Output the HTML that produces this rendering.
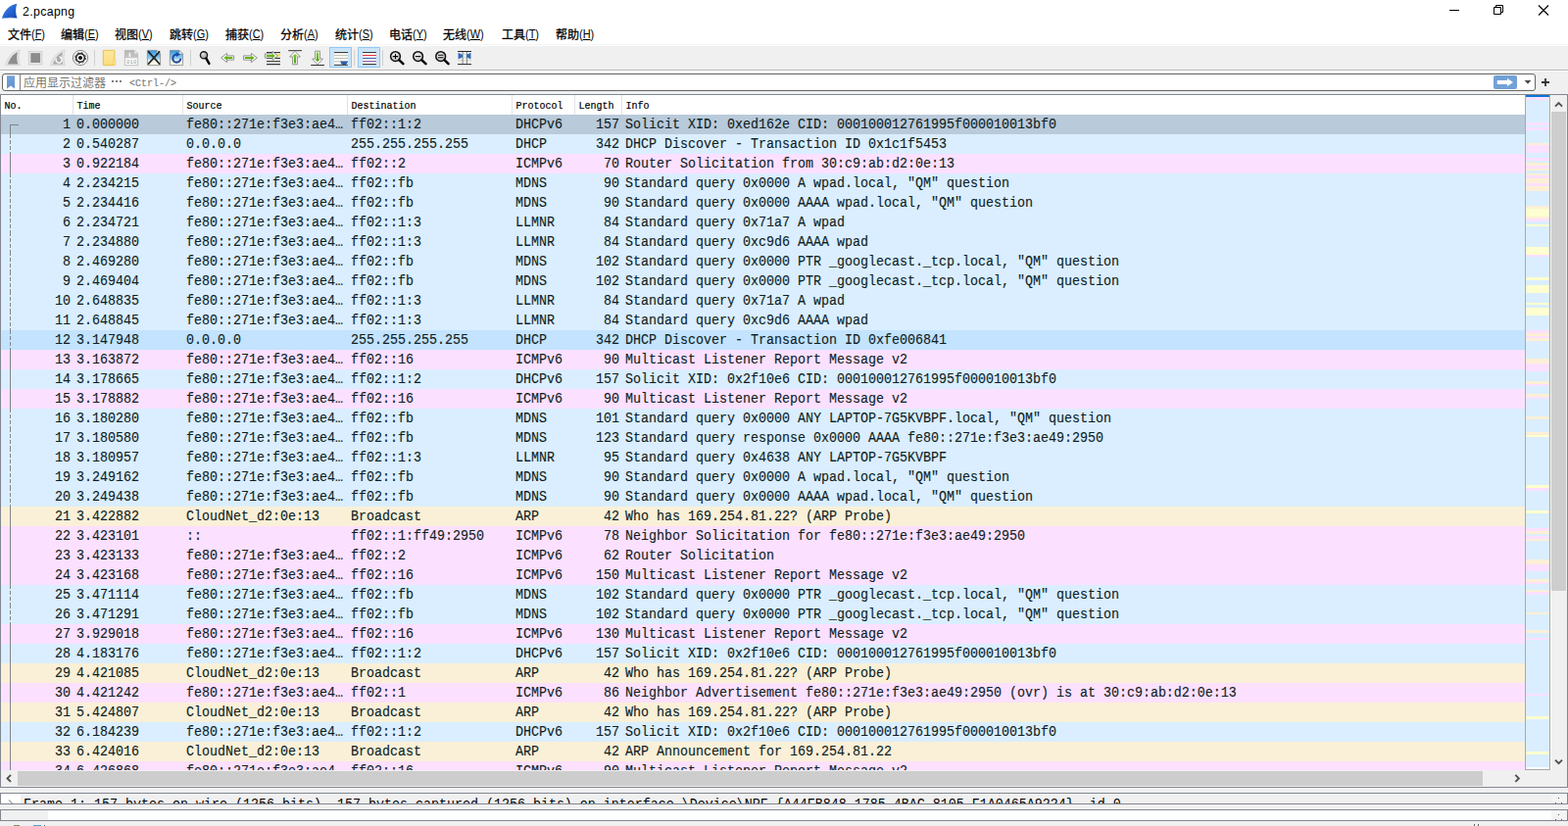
<!DOCTYPE html>
<html><head><meta charset="utf-8"><title>2.pcapng</title>
<style>
*{margin:0;padding:0;box-sizing:border-box}
html,body{width:1600px;height:843px;overflow:hidden;background:#f0f0f0;font-family:"Liberation Sans",sans-serif}
#w{position:relative;width:1600px;height:843px;overflow:hidden;background:#f0f0f0}
.abs{position:absolute}
.cjk{position:absolute;overflow:visible}
.cjk text{font-family:"Liberation Sans","Noto Sans CJK SC",sans-serif;font-size:1000px}
#title{position:absolute;left:0;top:0;width:1600px;height:47px;background:#fff;border-bottom:1px solid #fff}
#title:after{content:"";position:absolute;left:0;top:45px;width:1600px;height:1px;background:#f5f5f5}
#tt{position:absolute;left:23px;top:5.3px;font-size:12.3px;color:#000;line-height:14px;letter-spacing:.36px}
.mk{position:absolute;top:27.6px;font-size:12px;line-height:14px;color:#000;transform:scaleX(.91);transform-origin:0 0;white-space:nowrap}
#tb{position:absolute;left:0;top:47px;width:1600px;height:24px;background:#f0f0f0}
#fb{position:absolute;left:0;top:71px;width:1600px;height:25px;background:#f0f0f0;border-top:1px solid #b9b9b9}
#fb:after{content:"";position:absolute;left:0;top:0;width:1600px;height:1px;background:#fff}
#fbox{position:absolute;left:2px;top:75px;width:1565px;height:18px;border:1px solid #666;border-radius:3px;background:#fff}
#pl{position:absolute;left:0;top:96px;width:1600px;height:708px;background:#fff;border:1px solid #828790}
.pn{position:absolute;left:0;width:1600px;border:1px solid #828790;overflow:hidden}
#hd{position:absolute;left:1px;top:97px;width:1555px;height:20px;background:#fff}
.h{position:absolute;top:102.5px;font-family:"Liberation Mono",monospace;font-size:10px;line-height:12px;color:#000;white-space:nowrap;transform:scaleY(1.12);transform-origin:0 8.65px;-webkit-text-stroke:.18px #000}
.hs{position:absolute;top:97px;width:1px;height:20px;background:#e2e2e2}
#rows{position:absolute;left:1px;top:117px;width:1555px;height:669px;overflow:hidden;font-family:"Liberation Mono",monospace;font-size:13.34px;color:#0d1d23;-webkit-text-stroke:.12px #0d1d23}
.r{position:relative;height:20px;width:1555px;white-space:nowrap;line-height:20px}
.r b{font-weight:normal;position:absolute;top:.5px;height:20px;transform:scaleY(1.09);transform-origin:0 13.53px}
.r i{position:absolute;left:9px;top:0;width:1px;height:20px;background:#80858a}
.r i.ds{background:linear-gradient(#80858a 0 4px,transparent 4px 6px,#80858a 6px 10px,transparent 10px 12px,#80858a 12px 16px,transparent 16px 18px,#80858a 18px 20px)}
.r i.first{top:10px;height:10px}.r i.hz{left:9px;top:10px;width:9px;height:1px}
.n{left:0;width:71px;text-align:right}
.t{left:77px}.s{left:189px}.d{left:357px}.p{left:525px}.l{left:580px;width:51px;text-align:right}.f{left:637px}
.u{background:#daeeff}.i{background:#fce0ff}.a{background:#faf0d7}.sel{background:#b9cada}.hov{background:#c3e3fe}
#fr{left:23px;top:2.3px;font-family:"Liberation Mono",monospace;font-size:13.34px;line-height:20px;color:#000;white-space:nowrap;transform:scaleY(1.09);transform-origin:0 13.53px}
#mm{position:absolute;left:1557px;top:97px;width:24px;height:686px;background:#daeeff;overflow:hidden}
#mm i{position:absolute;left:0;width:24px}
</style></head><body><div id="w">
<div id="title"></div>
<svg class="abs" style="left:0;top:0" width="24" height="24" viewBox="0 0 24 24">
<defs><linearGradient id="gfin" x1="0" y1="0" x2="1" y2="1"><stop offset="0" stop-color="#4b8fe8"/><stop offset=".55" stop-color="#2464d2"/><stop offset="1" stop-color="#1546a8"/></linearGradient></defs>
<path d="M2 18.7C4.2 11 9.5 5.2 17.3 3.8C15.6 8.6 15.7 14 17.6 18.5C12.5 17.6 7 17.8 2 18.7Z" fill="url(#gfin)"/>
<path d="M2 18.7C7 17.5 12.5 17.3 17.6 18.3L17.6 18.8C12.5 18.2 7 18.3 2 19Z" fill="#9ab4dc"/>
</svg>
<svg class="abs" style="left:1470px;top:0" width="130" height="24" viewBox="1470 0 130 24" fill="none" stroke="#000" stroke-width="1">
<path d="M1479 10.5H1489"/>
<path d="M1524.5 7.5H1531.5V14.5H1524.5Z"/><path d="M1526.5 7.5V5.5H1533.5V12.5H1531.5"/>
<path d="M1570 5.5L1580 15.5M1580 5.5L1570 15.5" stroke-width="1.1"/>
</svg>
<span id="tt">2.pcapng</span>
<svg class="cjk " style="left:7.8px;top:28.6px" width="24" height="12" viewBox="0 0 2000 1000" fill="#000" stroke="#000" stroke-width="22"><text x="0" y="880">文件</text></svg>
<span class="mk" style="left:32.4px">(<u>F</u>)</span>
<svg class="cjk " style="left:61.8px;top:28.6px" width="24" height="12" viewBox="0 0 2000 1000" fill="#000" stroke="#000" stroke-width="22"><text x="0" y="880">编辑</text></svg>
<span class="mk" style="left:86.4px">(<u>E</u>)</span>
<svg class="cjk " style="left:116.8px;top:28.6px" width="24" height="12" viewBox="0 0 2000 1000" fill="#000" stroke="#000" stroke-width="22"><text x="0" y="880">视图</text></svg>
<span class="mk" style="left:141.4px">(<u>V</u>)</span>
<svg class="cjk " style="left:172.8px;top:28.6px" width="24" height="12" viewBox="0 0 2000 1000" fill="#000" stroke="#000" stroke-width="22"><text x="0" y="880">跳转</text></svg>
<span class="mk" style="left:197.4px">(<u>G</u>)</span>
<svg class="cjk " style="left:229.8px;top:28.6px" width="24" height="12" viewBox="0 0 2000 1000" fill="#000" stroke="#000" stroke-width="22"><text x="0" y="880">捕获</text></svg>
<span class="mk" style="left:254.4px">(<u>C</u>)</span>
<svg class="cjk " style="left:285.8px;top:28.6px" width="24" height="12" viewBox="0 0 2000 1000" fill="#000" stroke="#000" stroke-width="22"><text x="0" y="880">分析</text></svg>
<span class="mk" style="left:310.4px">(<u>A</u>)</span>
<svg class="cjk " style="left:341.8px;top:28.6px" width="24" height="12" viewBox="0 0 2000 1000" fill="#000" stroke="#000" stroke-width="22"><text x="0" y="880">统计</text></svg>
<span class="mk" style="left:366.4px">(<u>S</u>)</span>
<svg class="cjk " style="left:396.8px;top:28.6px" width="24" height="12" viewBox="0 0 2000 1000" fill="#000" stroke="#000" stroke-width="22"><text x="0" y="880">电话</text></svg>
<span class="mk" style="left:421.4px">(<u>Y</u>)</span>
<svg class="cjk " style="left:451.8px;top:28.6px" width="24" height="12" viewBox="0 0 2000 1000" fill="#000" stroke="#000" stroke-width="22"><text x="0" y="880">无线</text></svg>
<span class="mk" style="left:476.4px">(<u>W</u>)</span>
<svg class="cjk " style="left:511.8px;top:28.6px" width="24" height="12" viewBox="0 0 2000 1000" fill="#000" stroke="#000" stroke-width="22"><text x="0" y="880">工具</text></svg>
<span class="mk" style="left:536.4px">(<u>T</u>)</span>
<svg class="cjk " style="left:566.8px;top:28.6px" width="24" height="12" viewBox="0 0 2000 1000" fill="#000" stroke="#000" stroke-width="22"><text x="0" y="880">帮助</text></svg>
<span class="mk" style="left:591.4px">(<u>H</u>)</span>
<div id="tb"></div>
<svg class="abs" style="left:0;top:46px" width="500" height="26" viewBox="0 46 500 26">
<defs>
<linearGradient id="gfold" x1="0" y1="0" x2="0" y2="1"><stop offset="0" stop-color="#fde79e"/><stop offset="1" stop-color="#fadc7e"/></linearGradient>
<linearGradient id="gsky" x1="0" y1="0" x2="0" y2="1"><stop offset="0" stop-color="#2f97e0"/><stop offset="0.5" stop-color="#8ccaf0"/><stop offset="0.7" stop-color="#f4f4ea"/><stop offset="1" stop-color="#fbfbe6"/></linearGradient>
<linearGradient id="ggray" x1="0" y1="0" x2="0" y2="1"><stop offset="0" stop-color="#b4b4b4"/><stop offset="0.5" stop-color="#c8c8c8"/><stop offset="0.55" stop-color="#fdfdfd"/><stop offset="1" stop-color="#ffffff"/></linearGradient>
<linearGradient id="ggrn" x1="0" y1="0" x2="0" y2="1"><stop offset="0" stop-color="#7ccf1e"/><stop offset="1" stop-color="#4c9c0c"/></linearGradient>
<radialGradient id="glens" cx="0.4" cy="0.35" r="0.7"><stop offset="0" stop-color="#f0f0f0"/><stop offset="1" stop-color="#bdbdbd"/></radialGradient>
<radialGradient id="glens2" cx="0.35" cy="0.3" r="0.8"><stop offset="0" stop-color="#e4e4e4"/><stop offset="1" stop-color="#8c8c8c"/></radialGradient>
</defs>
<!-- 1 fin -->
<path d="M5.4 66.6C7.5 58.5 12.5 53 20.3 51C18.6 56 18.6 62 20.5 66.6Z" fill="#e6e6e6" stroke="#cfcfcf" stroke-width=".7"/>
<path d="M8 65.5C10 59.5 13 55.5 18 53.2C16.8 57.5 17 61.5 18.4 65.5Z" fill="#8e8e8e"/>
<!-- 2 stop -->
<rect x="29.3" y="52.3" width="13.6" height="13.6" fill="#e9e9e9" stroke="#c6c6c6" stroke-width=".7"/>
<rect x="31.3" y="54.1" width="9.8" height="9.9" fill="#8c8c8c"/>
<!-- 3 restart fin -->
<path d="M51.4 66.6C53.5 58.5 58.5 53 66.3 51C64.6 56 64.6 62 66.5 66.6Z" fill="#e6e6e6" stroke="#cfcfcf" stroke-width=".7"/>
<path d="M54 65.5C56 59.5 59 55.5 64 53.2C62.8 57.5 63 61.5 64.4 65.5Z" fill="#a9a9a9"/>
<path d="M61.9 58.6A3 3 0 1 1 57.6 59.6" fill="none" stroke="#f4f4f4" stroke-width="1.5"/>
<path d="M60.2 57.2L63.2 57.8L61.6 60.4Z" fill="#f4f4f4"/>
<!-- 4 options -->
<circle cx="82" cy="59" r="7.6" fill="#fff" stroke="#555" stroke-width=".7"/>
<circle cx="82" cy="59" r="5" fill="#222"/>
<circle cx="82" cy="59" r="5.4" fill="none" stroke="#222" stroke-width=".9" stroke-dasharray="2.3 1.94"/>
<circle cx="82" cy="59" r="3.5" fill="#fff"/>
<circle cx="82" cy="59" r="2.1" fill="#0c0c0c"/>
<!-- sep -->
<rect x="96" y="51" width="1" height="16" fill="#cfcfcf"/>
<!-- 5 folder -->
<rect x="105.3" y="51.4" width="11.6" height="15.2" rx=".6" fill="url(#gfold)" stroke="#e9bd3c" stroke-width=".9"/>
<rect x="115.8" y="60.3" width="2" height="6.2" rx=".5" fill="#fde9a6" stroke="#efc84f" stroke-width=".7"/>
<!-- 6 save -->
<path d="M127.4 51.4H137L140.6 55V66.6H127.4Z" fill="url(#ggray)" stroke="#b5b5b5" stroke-width=".8"/>
<path d="M137 51.4V55H140.6Z" fill="#f4f4f4" stroke="#b5b5b5" stroke-width=".5"/>
<path d="M131.5 58V54.5L133 53L133.5 58Z" fill="#efefef"/>
<text x="129" y="64.6" font-family="Liberation Mono" font-size="5.6" fill="#9a9a9a" letter-spacing=".1">010</text>
<!-- 7 close -->
<path d="M150.4 51.4H160L163.6 55V66.6H150.4Z" fill="url(#gsky)" stroke="#8a8a8a" stroke-width=".8"/>
<path d="M160 51.4V55H163.6Z" fill="#f4f4f4" stroke="#8a8a8a" stroke-width=".5"/>
<path d="M151.6 52.8L162.6 65M162.6 52.8L151.6 65" stroke="#222" stroke-width="1.8" stroke-linecap="round"/>
<!-- 8 reload -->
<path d="M173.4 51.4H183L186.6 55V66.6H173.4Z" fill="url(#gsky)" stroke="#8a8a8a" stroke-width=".8"/>
<path d="M183 51.4V55H186.6Z" fill="#f4f4f4" stroke="#8a8a8a" stroke-width=".5"/>
<path d="M184.3 59.8A4 4 0 1 1 180 55.6" fill="none" stroke="#1d4da3" stroke-width="2.1"/>
<path d="M179.6 53L184 55.4L180 58Z" fill="#1d4da3"/>
<rect x="96" y="51" width="1" height="16" fill="#cfcfcf" transform="translate(98 0)"/>
<!-- 9 find -->
<circle cx="208" cy="56.3" r="3.6" fill="url(#glens2)" stroke="#1c1c1c" stroke-width="1.35"/>
<path d="M210.4 59.6L213.4 64.9" stroke="#000" stroke-width="2.4" stroke-linecap="round"/>
<!-- 10 back -->
<path d="M225.6 59L231.6 54.4V56.9H238.6V61.1H231.6V63.6Z" fill="#fff" stroke="#858585" stroke-width=".9" stroke-linejoin="round"/>
<path d="M228.2 59L231.8 56.5V58.1H237.3V59.9H231.8V61.5Z" fill="url(#ggrn)"/>
<!-- 11 fwd -->
<path d="M262.4 59L256.4 54.4V56.9H248.6V61.1H256.4V63.6Z" fill="#fff" stroke="#858585" stroke-width=".9" stroke-linejoin="round"/>
<path d="M259.8 59L256.2 56.5V58.1H249.9V59.9H256.2V61.5Z" fill="url(#ggrn)"/>
<!-- 12 goto -->
<rect x="272" y="53.1" width="14" height="1" fill="#222"/>
<rect x="272" y="58.9" width="14" height="1" fill="#222"/>
<rect x="272" y="62.2" width="14" height="1" fill="#222"/>
<rect x="272" y="65.1" width="14" height="1.1" fill="#222"/>
<rect x="281" y="55.3" width="5" height="2.3" fill="#ffe23a"/>
<path d="M283.4 57L278 52.4V54.9H270.4V59.1H278V61.4Z" fill="#fff" stroke="#858585" stroke-width=".9" stroke-linejoin="round"/>
<path d="M280.9 57L277.8 54.6V56.1H271.8V57.9H277.8V59.4Z" fill="url(#ggrn)"/>
<!-- 13 top -->
<rect x="294.2" y="51.2" width="13.8" height="1" fill="#333"/>
<path d="M301 52.3L306.4 58H303.4V65.8H298.6V58H295.6Z" fill="#fff" stroke="#858585" stroke-width=".9" stroke-linejoin="round"/>
<path d="M301 55L303.6 57.6H302.1V64.6H299.9V57.6H298.4Z" fill="url(#ggrn)"/>
<!-- 14 bottom -->
<path d="M324 65.8L329.4 60H326.4V52.2H321.6V60H318.6Z" fill="#fff" stroke="#858585" stroke-width=".9" stroke-linejoin="round"/>
<path d="M324 63L326.6 60.4H325.1V53.4H322.9V60.4H321.4Z" fill="url(#ggrn)"/>
<rect x="317.2" y="66" width="13.8" height="1" fill="#333"/>
<!-- 15 autoscroll (checked) -->
<rect x="336.5" y="48.5" width="22" height="20" fill="#cce4f7" stroke="#90c8f6"/>
<rect x="341" y="53.5" width="14" height="12.5" fill="#fcfcfa"/>
<rect x="341" y="53.1" width="14" height="1" fill="#2e2e2e"/>
<rect x="341" y="56.2" width="14" height=".9" fill="#b9b9ad"/>
<rect x="341" y="59" width="14" height=".9" fill="#b9b9ad"/>
<rect x="341" y="62.4" width="14" height=".9" fill="#b9b9ad"/>
<path d="M347.2 62.4H355C354.6 64.4 353.5 65.4 353 66H349.2C348.6 65.3 347.6 64.3 347.2 62.4Z" fill="#2d5da8"/>
<rect x="341" y="65.8" width="14" height="1" fill="#2e2e2e"/>
<rect x="361.2" y="51" width="1" height="16" fill="#cfcfcf"/>
<!-- 16 colorize (checked) -->
<rect x="365.5" y="48.5" width="22" height="20" fill="#cce4f7" stroke="#90c8f6"/>
<rect x="370" y="53.5" width="14" height="12.5" fill="#fff"/>
<rect x="370" y="53.1" width="14" height="1" fill="#2a2a2a"/>
<rect x="370" y="56.1" width="14" height="1" fill="#ea1c24"/>
<rect x="370" y="58.9" width="14" height="1" fill="#2b55a3"/>
<rect x="370" y="62.2" width="14" height="1" fill="#7a3f8c"/>
<rect x="370" y="65.1" width="14" height="1" fill="#2a2a2a"/>
<rect x="390" y="51" width="1" height="16" fill="#cfcfcf"/>
<!-- 17-19 zoom -->
<g id="zm"><circle cx="403.5" cy="57.6" r="4.9" fill="url(#glens)" stroke="#111" stroke-width="1.5"/>
<path d="M407.4 61.4L411.4 65.2" stroke="#000" stroke-width="2.5" stroke-linecap="round"/></g>
<path d="M400.8 57.6H406.2M403.5 54.9V60.3" stroke="#000" stroke-width="1.1"/>
<use href="#zm" x="23.1"/>
<path d="M423.9 57.6H429.3" stroke="#000" stroke-width="1.1"/>
<use href="#zm" x="46.2"/>
<path d="M447 56.3H452.4M447 58.8H452.4" stroke="#000" stroke-width="1.1"/>
<!-- 20 resize columns -->
<rect x="467" y="55" width="14" height=".8" fill="#d4d4c8"/>
<rect x="467" y="58.3" width="14" height=".8" fill="#d4d4c8"/>
<rect x="467" y="61.4" width="14" height=".8" fill="#d4d4c8"/>
<rect x="471.6" y="52.5" width="1" height="13" fill="#858585"/>
<rect x="475.9" y="52.5" width="1" height="13" fill="#858585"/>
<rect x="467" y="52" width="14" height="1" fill="#2a2a2a"/>
<rect x="467" y="65.1" width="14" height="1" fill="#2a2a2a"/>
<path d="M467.6 53.8V60.4L472 58.3V55.9Z" fill="#2d6cc0"/>
<path d="M480.4 53.8V60.4L476 58.3V55.9Z" fill="#2d6cc0"/>
</svg>

<div id="fb"></div><div id="fbox"></div>
<svg class="cjk " style="left:24px;top:77.8px" width="84" height="12" viewBox="0 0 7000 1000" fill="#747474" stroke="#747474" stroke-width="0"><text x="0" y="880">应用显示过滤器</text></svg>
<svg class="abs" style="left:0;top:72px" width="1600" height="24" viewBox="0 72 1600 24">
<defs><linearGradient id="gbm" x1="0" y1="0" x2="0" y2="1"><stop offset="0" stop-color="#76a3da"/><stop offset="1" stop-color="#5f92d0"/></linearGradient></defs>
<path d="M7 77.3H15V90.6L11 87.6L7 90.6Z" fill="url(#gbm)"/>
<rect x="20" y="76" width="1" height="16" fill="#7d7d7d"/>
<rect x="114" y="82" width="2" height="2" fill="#808080"/><rect x="118" y="82" width="2" height="2" fill="#808080"/><rect x="122" y="82" width="2" height="2" fill="#808080"/>
<rect x="1524" y="77" width="24" height="14" rx="2" fill="#73a1d6"/>
<path d="M1527.8 82H1538V80L1544 84L1538 88V86H1527.8Z" fill="#fff"/>
<path d="M1555.6 82H1562.4L1559 85.8Z" fill="#4a4a4a"/>
<path d="M1573 84H1581M1577 80V88" stroke="#333" stroke-width="1.8"/>
</svg>
<span class="h" style="left:132px;top:79.6px;color:#808080;-webkit-text-stroke:.15px #808080">&lt;Ctrl-/&gt;</span>
<div id="pl"></div>
<div id="hd"></div>
<span class="h" style="left:4.5px">No.</span>
<span class="h" style="left:78.5px">Time</span>
<span class="h" style="left:190.5px">Source</span>
<span class="h" style="left:358.5px">Destination</span>
<span class="h" style="left:526.5px">Protocol</span>
<span class="h" style="left:590.5px">Length</span>
<span class="h" style="left:638.5px">Info</span>
<div class="hs" style="left:74px"></div><div class="hs" style="left:186px"></div><div class="hs" style="left:354px"></div><div class="hs" style="left:522px"></div><div class="hs" style="left:586px"></div><div class="hs" style="left:634px"></div>
<div id="rows">
<div class="r sel"><i class="first"></i><i class="hz"></i><b class="n">1</b><b class="t">0.000000</b><b class="s">fe80::271e:f3e3:ae4…</b><b class="d">ff02::1:2</b><b class="p">DHCPv6</b><b class="l">157</b><b class="f">Solicit XID: 0xed162e CID: 000100012761995f000010013bf0</b></div>
<div class="r u"><i class="ds"></i><b class="n">2</b><b class="t">0.540287</b><b class="s">0.0.0.0</b><b class="d">255.255.255.255</b><b class="p">DHCP</b><b class="l">342</b><b class="f">DHCP Discover - Transaction ID 0x1c1f5453</b></div>
<div class="r i"><i></i><b class="n">3</b><b class="t">0.922184</b><b class="s">fe80::271e:f3e3:ae4…</b><b class="d">ff02::2</b><b class="p">ICMPv6</b><b class="l">70</b><b class="f">Router Solicitation from 30:c9:ab:d2:0e:13</b></div>
<div class="r u"><i class="ds"></i><b class="n">4</b><b class="t">2.234215</b><b class="s">fe80::271e:f3e3:ae4…</b><b class="d">ff02::fb</b><b class="p">MDNS</b><b class="l">90</b><b class="f">Standard query 0x0000 A wpad.local, &quot;QM&quot; question</b></div>
<div class="r u"><i class="ds"></i><b class="n">5</b><b class="t">2.234416</b><b class="s">fe80::271e:f3e3:ae4…</b><b class="d">ff02::fb</b><b class="p">MDNS</b><b class="l">90</b><b class="f">Standard query 0x0000 AAAA wpad.local, &quot;QM&quot; question</b></div>
<div class="r u"><i class="ds"></i><b class="n">6</b><b class="t">2.234721</b><b class="s">fe80::271e:f3e3:ae4…</b><b class="d">ff02::1:3</b><b class="p">LLMNR</b><b class="l">84</b><b class="f">Standard query 0x71a7 A wpad</b></div>
<div class="r u"><i class="ds"></i><b class="n">7</b><b class="t">2.234880</b><b class="s">fe80::271e:f3e3:ae4…</b><b class="d">ff02::1:3</b><b class="p">LLMNR</b><b class="l">84</b><b class="f">Standard query 0xc9d6 AAAA wpad</b></div>
<div class="r u"><i class="ds"></i><b class="n">8</b><b class="t">2.469280</b><b class="s">fe80::271e:f3e3:ae4…</b><b class="d">ff02::fb</b><b class="p">MDNS</b><b class="l">102</b><b class="f">Standard query 0x0000 PTR _googlecast._tcp.local, &quot;QM&quot; question</b></div>
<div class="r u"><i class="ds"></i><b class="n">9</b><b class="t">2.469404</b><b class="s">fe80::271e:f3e3:ae4…</b><b class="d">ff02::fb</b><b class="p">MDNS</b><b class="l">102</b><b class="f">Standard query 0x0000 PTR _googlecast._tcp.local, &quot;QM&quot; question</b></div>
<div class="r u"><i class="ds"></i><b class="n">10</b><b class="t">2.648835</b><b class="s">fe80::271e:f3e3:ae4…</b><b class="d">ff02::1:3</b><b class="p">LLMNR</b><b class="l">84</b><b class="f">Standard query 0x71a7 A wpad</b></div>
<div class="r u"><i class="ds"></i><b class="n">11</b><b class="t">2.648845</b><b class="s">fe80::271e:f3e3:ae4…</b><b class="d">ff02::1:3</b><b class="p">LLMNR</b><b class="l">84</b><b class="f">Standard query 0xc9d6 AAAA wpad</b></div>
<div class="r hov"><i class="ds"></i><b class="n">12</b><b class="t">3.147948</b><b class="s">0.0.0.0</b><b class="d">255.255.255.255</b><b class="p">DHCP</b><b class="l">342</b><b class="f">DHCP Discover - Transaction ID 0xfe006841</b></div>
<div class="r i"><i></i><b class="n">13</b><b class="t">3.163872</b><b class="s">fe80::271e:f3e3:ae4…</b><b class="d">ff02::16</b><b class="p">ICMPv6</b><b class="l">90</b><b class="f">Multicast Listener Report Message v2</b></div>
<div class="r u"><i></i><b class="n">14</b><b class="t">3.178665</b><b class="s">fe80::271e:f3e3:ae4…</b><b class="d">ff02::1:2</b><b class="p">DHCPv6</b><b class="l">157</b><b class="f">Solicit XID: 0x2f10e6 CID: 000100012761995f000010013bf0</b></div>
<div class="r i"><i></i><b class="n">15</b><b class="t">3.178882</b><b class="s">fe80::271e:f3e3:ae4…</b><b class="d">ff02::16</b><b class="p">ICMPv6</b><b class="l">90</b><b class="f">Multicast Listener Report Message v2</b></div>
<div class="r u"><i class="ds"></i><b class="n">16</b><b class="t">3.180280</b><b class="s">fe80::271e:f3e3:ae4…</b><b class="d">ff02::fb</b><b class="p">MDNS</b><b class="l">101</b><b class="f">Standard query 0x0000 ANY LAPTOP-7G5KVBPF.local, &quot;QM&quot; question</b></div>
<div class="r u"><i class="ds"></i><b class="n">17</b><b class="t">3.180580</b><b class="s">fe80::271e:f3e3:ae4…</b><b class="d">ff02::fb</b><b class="p">MDNS</b><b class="l">123</b><b class="f">Standard query response 0x0000 AAAA fe80::271e:f3e3:ae49:2950</b></div>
<div class="r u"><i class="ds"></i><b class="n">18</b><b class="t">3.180957</b><b class="s">fe80::271e:f3e3:ae4…</b><b class="d">ff02::1:3</b><b class="p">LLMNR</b><b class="l">95</b><b class="f">Standard query 0x4638 ANY LAPTOP-7G5KVBPF</b></div>
<div class="r u"><i class="ds"></i><b class="n">19</b><b class="t">3.249162</b><b class="s">fe80::271e:f3e3:ae4…</b><b class="d">ff02::fb</b><b class="p">MDNS</b><b class="l">90</b><b class="f">Standard query 0x0000 A wpad.local, &quot;QM&quot; question</b></div>
<div class="r u"><i class="ds"></i><b class="n">20</b><b class="t">3.249438</b><b class="s">fe80::271e:f3e3:ae4…</b><b class="d">ff02::fb</b><b class="p">MDNS</b><b class="l">90</b><b class="f">Standard query 0x0000 AAAA wpad.local, &quot;QM&quot; question</b></div>
<div class="r a"><i></i><b class="n">21</b><b class="t">3.422882</b><b class="s">CloudNet_d2:0e:13</b><b class="d">Broadcast</b><b class="p">ARP</b><b class="l">42</b><b class="f">Who has 169.254.81.22? (ARP Probe)</b></div>
<div class="r i"><i></i><b class="n">22</b><b class="t">3.423101</b><b class="s">::</b><b class="d">ff02::1:ff49:2950</b><b class="p">ICMPv6</b><b class="l">78</b><b class="f">Neighbor Solicitation for fe80::271e:f3e3:ae49:2950</b></div>
<div class="r i"><i></i><b class="n">23</b><b class="t">3.423133</b><b class="s">fe80::271e:f3e3:ae4…</b><b class="d">ff02::2</b><b class="p">ICMPv6</b><b class="l">62</b><b class="f">Router Solicitation</b></div>
<div class="r i"><i></i><b class="n">24</b><b class="t">3.423168</b><b class="s">fe80::271e:f3e3:ae4…</b><b class="d">ff02::16</b><b class="p">ICMPv6</b><b class="l">150</b><b class="f">Multicast Listener Report Message v2</b></div>
<div class="r u"><i class="ds"></i><b class="n">25</b><b class="t">3.471114</b><b class="s">fe80::271e:f3e3:ae4…</b><b class="d">ff02::fb</b><b class="p">MDNS</b><b class="l">102</b><b class="f">Standard query 0x0000 PTR _googlecast._tcp.local, &quot;QM&quot; question</b></div>
<div class="r u"><i class="ds"></i><b class="n">26</b><b class="t">3.471291</b><b class="s">fe80::271e:f3e3:ae4…</b><b class="d">ff02::fb</b><b class="p">MDNS</b><b class="l">102</b><b class="f">Standard query 0x0000 PTR _googlecast._tcp.local, &quot;QM&quot; question</b></div>
<div class="r i"><i></i><b class="n">27</b><b class="t">3.929018</b><b class="s">fe80::271e:f3e3:ae4…</b><b class="d">ff02::16</b><b class="p">ICMPv6</b><b class="l">130</b><b class="f">Multicast Listener Report Message v2</b></div>
<div class="r u"><i></i><b class="n">28</b><b class="t">4.183176</b><b class="s">fe80::271e:f3e3:ae4…</b><b class="d">ff02::1:2</b><b class="p">DHCPv6</b><b class="l">157</b><b class="f">Solicit XID: 0x2f10e6 CID: 000100012761995f000010013bf0</b></div>
<div class="r a"><i></i><b class="n">29</b><b class="t">4.421085</b><b class="s">CloudNet_d2:0e:13</b><b class="d">Broadcast</b><b class="p">ARP</b><b class="l">42</b><b class="f">Who has 169.254.81.22? (ARP Probe)</b></div>
<div class="r i"><i></i><b class="n">30</b><b class="t">4.421242</b><b class="s">fe80::271e:f3e3:ae4…</b><b class="d">ff02::1</b><b class="p">ICMPv6</b><b class="l">86</b><b class="f">Neighbor Advertisement fe80::271e:f3e3:ae49:2950 (ovr) is at 30:c9:ab:d2:0e:13</b></div>
<div class="r a"><i></i><b class="n">31</b><b class="t">5.424807</b><b class="s">CloudNet_d2:0e:13</b><b class="d">Broadcast</b><b class="p">ARP</b><b class="l">42</b><b class="f">Who has 169.254.81.22? (ARP Probe)</b></div>
<div class="r u"><i></i><b class="n">32</b><b class="t">6.184239</b><b class="s">fe80::271e:f3e3:ae4…</b><b class="d">ff02::1:2</b><b class="p">DHCPv6</b><b class="l">157</b><b class="f">Solicit XID: 0x2f10e6 CID: 000100012761995f000010013bf0</b></div>
<div class="r a"><i></i><b class="n">33</b><b class="t">6.424016</b><b class="s">CloudNet_d2:0e:13</b><b class="d">Broadcast</b><b class="p">ARP</b><b class="l">42</b><b class="f">ARP Announcement for 169.254.81.22</b></div>
<div class="r i"><i></i><b class="n">34</b><b class="t">6.426868</b><b class="s">fe80::271e:f3e3:ae4…</b><b class="d">ff02::16</b><b class="p">ICMPv6</b><b class="l">90</b><b class="f">Multicast Listener Report Message v2</b></div>
</div>
<div class="abs" style="left:1556px;top:97px;width:1px;height:689px;background:#a9a9a9"></div>
<div id="mm"><i style="top:0px;height:2px;background:#0a74d6"></i><i style="top:2px;height:3px;background:#fce0ff"></i><i style="top:28px;height:3px;background:#fce0ff"></i><i style="top:33px;height:3px;background:#fce0ff"></i><i style="top:49px;height:2px;background:#fdefd6"></i><i style="top:51px;height:8px;background:#fce0ff"></i><i style="top:64px;height:3px;background:#fce0ff"></i><i style="top:69px;height:3px;background:#fdefd6"></i><i style="top:72px;height:3px;background:#fce0ff"></i><i style="top:75px;height:2px;background:#fdefd6"></i><i style="top:80px;height:2px;background:#fdefd6"></i><i style="top:82px;height:3px;background:#fce0ff"></i><i style="top:85px;height:5px;background:#fdefd6"></i><i style="top:90px;height:3px;background:#fce0ff"></i><i style="top:93px;height:5px;background:#fdefd6"></i><i style="top:113px;height:3px;background:#fdefd6"></i><i style="top:116px;height:8px;background:#feffd0"></i><i style="top:124px;height:2px;background:#fdefd6"></i><i style="top:126px;height:3px;background:#fce0ff"></i><i style="top:132px;height:2px;background:#feffd0"></i><i style="top:155px;height:8px;background:#feffd0"></i><i style="top:163px;height:2px;background:#fce0ff"></i><i style="top:186px;height:3px;background:#feffd0"></i><i style="top:194px;height:8px;background:#feffd0"></i><i style="top:212px;height:2px;background:#feffd0"></i><i style="top:217px;height:8px;background:#feffd0"></i><i style="top:240px;height:3px;background:#fce0ff"></i><i style="top:243px;height:3px;background:#fdefd6"></i><i style="top:246px;height:2px;background:#fce0ff"></i><i style="top:248px;height:3px;background:#fdefd6"></i><i style="top:269px;height:5px;background:#fdefd6"></i><i style="top:274px;height:8px;background:#fce0ff"></i><i style="top:292px;height:3px;background:#fdefd6"></i><i style="top:295px;height:2px;background:#fce0ff"></i><i style="top:305px;height:3px;background:#fdefd6"></i><i style="top:308px;height:2px;background:#fce0ff"></i><i style="top:328px;height:3px;background:#fdefd6"></i><i style="top:344px;height:3px;background:#fdefd6"></i><i style="top:347px;height:2px;background:#feffd0"></i><i style="top:398px;height:3px;background:#feffd0"></i><i style="top:401px;height:3px;background:#fce0ff"></i><i style="top:424px;height:3px;background:#feffd0"></i><i style="top:442px;height:3px;background:#fce0ff"></i><i style="top:445px;height:3px;background:#fdefd6"></i><i style="top:450px;height:3px;background:#fce0ff"></i><i style="top:453px;height:2px;background:#fdefd6"></i><i style="top:474px;height:5px;background:#fdefd6"></i><i style="top:479px;height:7px;background:#fce0ff"></i><i style="top:494px;height:3px;background:#fdefd6"></i><i style="top:497px;height:2px;background:#fce0ff"></i><i style="top:505px;height:2px;background:#fdefd6"></i><i style="top:507px;height:3px;background:#fce0ff"></i><i style="top:528px;height:2px;background:#fdefd6"></i><i style="top:546px;height:3px;background:#fdefd6"></i><i style="top:554px;height:2px;background:#fce0ff"></i><i style="top:611px;height:2px;background:#fce0ff"></i><i style="top:634px;height:3px;background:#feffd0"></i><i style="top:670px;height:3px;background:#feffd0"></i></div>
<div class="abs" style="left:1557px;top:783px;width:24px;height:2px;background:#fff"></div>
<div class="abs" style="left:1556px;top:785px;width:26px;height:1px;background:#a9a9a9"></div>
<div class="abs" style="left:1581px;top:97px;width:1px;height:689px;background:#a9a9a9"></div>
<div class="abs" style="left:1582px;top:97px;width:17px;height:689px;background:#f0f0f0;border-left:1px solid #fbfbfb"></div>
<div class="abs" style="left:1583px;top:114px;width:15px;height:489px;background:#cdcdcd"></div>
<div class="abs" style="left:1px;top:786px;width:1598px;height:17px;background:#f0f0f0"></div>
<div class="abs" style="left:18px;top:787px;width:1495px;height:15px;background:#cdcdcd"></div>
<svg class="abs" style="left:0;top:96px" width="1600" height="710" viewBox="0 96 1600 710" fill="none" stroke="#505050" stroke-width="1.9">
<path d="M1587 108.6L1590.5 105.1L1594 108.6"/>
<path d="M1587 775.6L1590.5 779.1L1594 775.6"/>
<path d="M11 790.9L7.5 794.4L11 797.9"/>
<path d="M1546.3 790.9L1549.8 794.4L1546.3 797.9"/>
</svg>
<div class="pn" style="top:809px;height:12px;background:#f0f0f0"><div class="abs" style="left:0;top:0;width:20px;height:10px;background:#fff"></div><div class="abs" style="left:1582px;top:0;width:16px;height:10px;background:#f4f4f4"></div>
<span class="abs" id="fr">Frame 1: 157 bytes on wire (1256 bits), 157 bytes captured (1256 bits) on interface \Device\NPF_{A44FB848-1785-4BAC-8105-F1A0465A9224}, id 0</span>
<svg class="abs" style="left:6px;top:5px" width="10" height="8" viewBox="0 0 10 8"><path d="M2 1.5L6.5 6" stroke="#a6a6a6" stroke-width="1.3" fill="none"/></svg>
<div class="abs" style="left:1589px;top:4px;width:1px;height:1px;background:#555"></div><div class="abs" style="left:1586px;top:9px;width:1px;height:1px;background:#555"></div><div class="abs" style="left:1592px;top:9px;width:1px;height:1px;background:#555"></div>
</div>
<div class="pn" style="top:826px;height:12px;background:#fff"><div class="abs" style="left:0;top:0;width:48px;height:10px;background:#f0f0f0"></div><div class="abs" style="left:1582px;top:0;width:16px;height:10px;background:#f4f4f4"></div>
<div class="abs" style="left:1589px;top:4px;width:1px;height:1px;background:#555"></div><div class="abs" style="left:1586px;top:9px;width:1px;height:1px;background:#555"></div><div class="abs" style="left:1592px;top:9px;width:1px;height:1px;background:#555"></div>
</div>
<div class="abs" style="left:14px;top:842px;width:6px;height:1px;background:#8a8a5c"></div>
<div class="abs" style="left:34px;top:842px;width:8px;height:1px;background:#4aa3d8"></div>
<div class="abs" style="left:45px;top:842px;width:1px;height:1px;background:#555"></div>
<div class="abs" style="left:1504px;top:841px;width:1px;height:2px;background:#666"></div><div class="abs" style="left:1508px;top:841px;width:1px;height:2px;background:#666"></div>
</div></body></html>
